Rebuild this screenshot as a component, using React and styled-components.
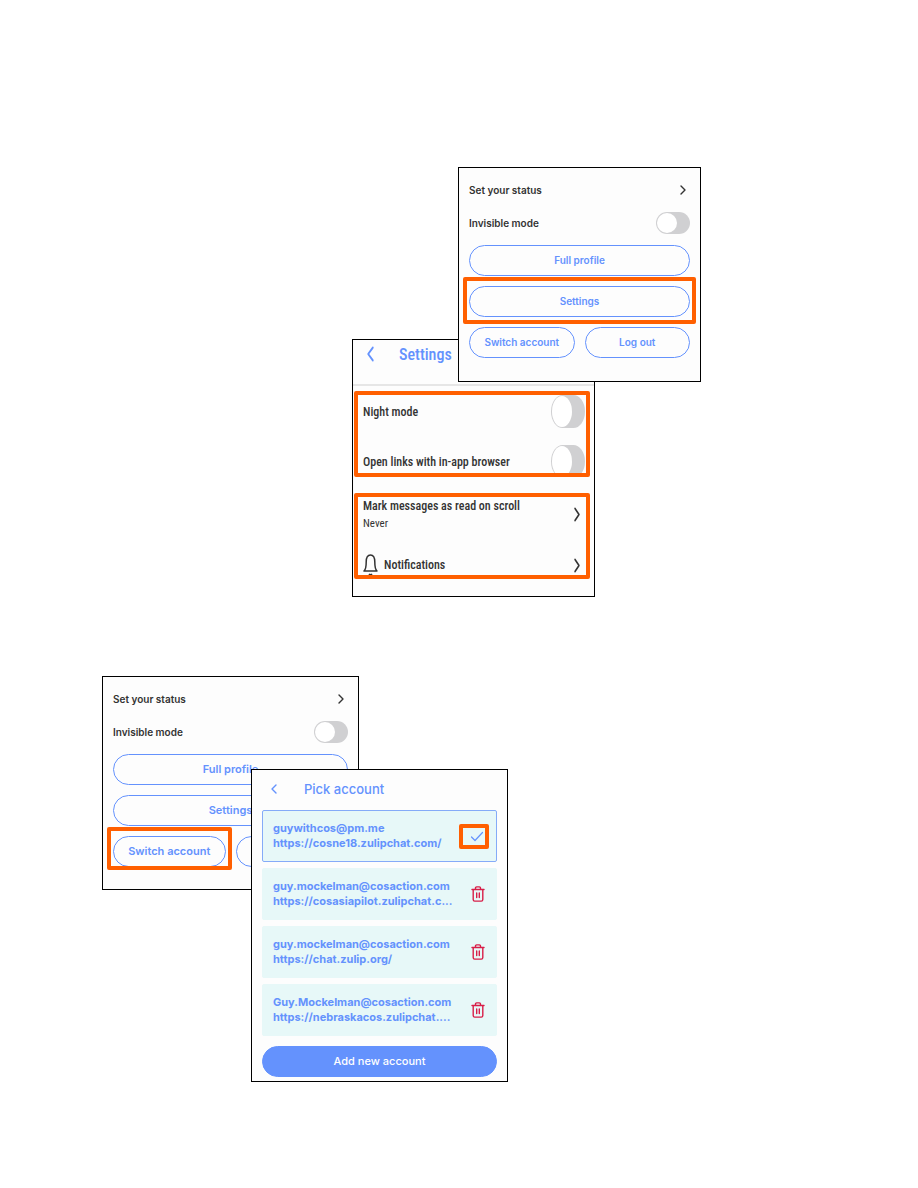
import React, { useState } from "react";
import styled, { createGlobalStyle } from "styled-components";

const GlobalStyle = createGlobalStyle`
  * {
    box-sizing: border-box;
  }
  body {
    margin: 0;
    background: #ffffff;
    color: #333333;
    font-family: Inter, "Liberation Sans", sans-serif;
  }
`;

const Page = styled.main`
  display: flex;
  flex-direction: column;
  gap: 79px;
  padding: 167px 0 106px;
`;

const Figure = styled.section`
  display: grid;
  grid-template-columns: ${(props) => props.$columns};
  grid-template-rows: ${(props) => props.$rows};
`;

const Panel = styled.article`
  grid-area: ${(props) => props.$area};
  z-index: ${(props) => (props.$front ? 1 : 0)};
  min-width: 0;
  border: 1px solid #000000;
  background: #fdfdfd;
`;

const MenuPanel = styled(Panel)`
  padding: 0 10px;
  font-size: ${(props) => (props.$large ? 11 : 10)}px;
`;

const StatusRow = styled.button`
  display: flex;
  align-items: center;
  justify-content: space-between;
  width: 100%;
  height: 44px;
  padding: 0 4px 0 0;
  border: 0;
  background: none;
  color: #333333;
  font: inherit;
  font-size: 10px;
  font-weight: 600;
  cursor: pointer;
`;

const ToggleRow = styled.label`
  display: flex;
  align-items: center;
  justify-content: space-between;
  font-size: 10px;
  font-weight: 600;
`;

const Toggle = styled.input.attrs({ type: "checkbox", role: "switch" })`
  appearance: none;
  flex: none;
  display: flex;
  width: 34px;
  height: ${(props) => (props.$tall ? 33 : 22)}px;
  margin: 0;
  padding: 1px;
  border-radius: ${(props) => (props.$tall ? "12px / 17px" : "11px")};
  background: #d0d0d2;
  cursor: pointer;

  &::before {
    content: "";
    width: 20px;
    height: 100%;
    border-radius: 50%;
    background: #ffffff;
  }

  &:checked {
    justify-content: flex-end;
    background: #6492fd;
  }
`;

const ButtonStack = styled.div`
  display: flex;
  flex-direction: column;
  gap: 10px;
  padding: 11px 0 23px;
`;

const ButtonPair = styled.div`
  display: grid;
  grid-template-columns: 1fr 1fr;
  gap: 10px;
`;

const PillButton = styled.button`
  width: 100%;
  height: 31px;
  padding: 0 0 1px;
  border: 1px solid #6492fd;
  border-radius: 16px;
  background: ${(props) => (props.$filled ? "#6492fd" : "transparent")};
  color: ${(props) => (props.$filled ? "#ffffff" : "#6492fd")};
  font: inherit;
  font-weight: ${(props) => (props.$filled ? 500 : 600)};
  white-space: nowrap;
  cursor: pointer;
`;

const Marked = styled.div`
  position: relative;

  &::after {
    content: "";
    position: absolute;
    inset: ${(props) => props.$inset};
    border: 4px solid #ff5f00;
    border-radius: 2px;
    pointer-events: none;
  }
`;

const BackButton = styled.button`
  display: flex;
  padding: 0;
  border: 0;
  background: none;
  color: #6492fd;
  cursor: pointer;
`;

const SettingsPanel = styled(Panel)`
  padding-bottom: 1px;
  font-family: "Roboto Condensed", "Liberation Sans Narrow", Roboto, sans-serif;
`;

const SettingsHeader = styled.header`
  display: flex;
  align-items: center;
  gap: 25px;
  height: 46px;
  padding: 0 0 16px 14px;
  border-bottom: 2px solid #e6e6e6;
`;

const SettingsTitle = styled.h2`
  margin: 0;
  color: #6492fd;
  font-size: 16px;
  font-weight: 500;
`;

const SettingsGroup = styled.div`
  display: flex;
  flex-direction: column;
  height: 86px;
  margin: 5px 4px 16px 1px;
  padding: 0 1px 0 5px;
  border: 4px solid #ff5f00;
  border-radius: 2px;
  overflow: hidden;
`;

const SettingRow = styled(ToggleRow)`
  flex: none;
  height: 33px;
  margin-bottom: 17px;
  font-size: 12px;
  font-weight: 500;
`;

const LinkRow = styled.button`
  flex: none;
  display: flex;
  align-items: center;
  gap: 6px;
  height: ${(props) => props.$height}px;
  padding: 0 5px 0 0;
  border: 0;
  background: none;
  color: #333333;
  font-family: inherit;
  font-size: 12px;
  font-weight: 500;
  line-height: 17px;
  text-align: left;
  cursor: pointer;
`;

const LinkText = styled.span`
  flex: 1;
`;

const LinkNote = styled.span`
  display: block;
  font-size: 11px;
  font-weight: 400;
`;

const AccountPanel = styled(Panel)`
  padding: 0 10px 4px;
  font-size: 11px;
`;

const AccountHeader = styled.header`
  display: flex;
  align-items: center;
  gap: 27px;
  height: 40px;
  padding: 0 0 2px 9px;
`;

const AccountTitle = styled.h2`
  margin: 0;
  color: #6492fd;
  font-size: 13px;
  font-weight: 500;
`;

const AccountList = styled.ul`
  display: flex;
  flex-direction: column;
  gap: 6px;
  margin: 0 0 10px;
  padding: 0;
  list-style: none;
`;

const AccountItem = styled.li`
  display: flex;
  align-items: center;
  justify-content: space-between;
  height: 52px;
  padding: 0 11px 0 10px;
  border: 1px solid ${(props) => (props.$active ? "#85abf8" : "#e7f8f8")};
  border-radius: 2px;
  background: #e7f8f8;
`;

const AccountText = styled.div`
  min-width: 0;
  color: #6492fd;
  font-weight: 700;
  line-height: 15px;
  white-space: nowrap;
`;

const IconButton = styled.button`
  display: flex;
  padding: 0;
  border: 0;
  background: none;
  color: #d81e48;
  cursor: pointer;
`;

const CurrentMark = styled(Marked)`
  display: flex;
  color: #6492fd;
`;

function Chevron({ back, width = 6, height = 10 }) {
  return (
    <svg width={width} height={height} viewBox="0 0 6 10" preserveAspectRatio="none" fill="none" stroke="currentColor" strokeWidth="1.4" strokeLinecap="round" strokeLinejoin="round">
      <path d={back ? "M5 1L1 5l4 4" : "M1 1l4 4-4 4"} />
    </svg>
  );
}

function BellIcon() {
  return (
    <svg width="15" height="22" viewBox="0 0 15 22" fill="none" stroke="currentColor" strokeWidth="1.5" strokeLinejoin="round">
      <path d="M1 17h13c-1.800-1.500-2.200-3-2.200-9C11.800 3.500 10 1 7.500 1S3.200 3.500 3.200 8c0 6-.4 7.500-2.200 9z" />
      <path d="M6 20c.8 1 2.200 1 3 0" />
    </svg>
  );
}

function TrashIcon() {
  return (
    <svg width="14" height="16" viewBox="0 0 14 16" fill="none" stroke="currentColor" strokeWidth="1.400" strokeLinecap="round" strokeLinejoin="round">
      <path d="M1 3.500h12M2.200 3.500v10c0 1 .6 1.600 1.500 1.600h6.600c.9 0 1.500-.6 1.500-1.600v-10M4.500 3.500V2c0-.7.4-1.100 1.100-1.100h2.800c.7 0 1.100.4 1.100 1.100v1.500M5.700 7v4.500M8.300 7v4.500" />
    </svg>
  );
}

function CheckIcon() {
  return (
    <svg width="16" height="11" viewBox="0 0 16 11" fill="none" stroke="currentColor" strokeWidth="1.200" strokeLinecap="round" strokeLinejoin="round">
      <path d="M2.500 6L6 9.500 13.500 1.500" />
    </svg>
  );
}

const accounts = [
  { email: "guywithcos@pm.me", url: "https://cosne18.zulipchat.com/", active: true },
  { email: "guy.mockelman@cosaction.com", url: "https://cosasiapilot.zulipchat.c..." },
  { email: "guy.mockelman@cosaction.com", url: "https://chat.zulip.org/" },
  { email: "Guy.Mockelman@cosaction.com", url: "https://nebraskacos.zulipchat...." },
];

function ProfileMenu({ area, front, large, marked }) {
  const [invisible, setInvisible] = useState(false);

  const settings = <PillButton>Settings</PillButton>;
  const switchAccount = <PillButton>Switch account</PillButton>;

  return (
    <MenuPanel $area={area} $front={front} $large={large}>
      <StatusRow>
        Set your status
        <Chevron />
      </StatusRow>
      <ToggleRow>
        Invisible mode
        <Toggle checked={invisible} onChange={() => setInvisible(!invisible)} />
      </ToggleRow>
      <ButtonStack>
        <PillButton>Full profile</PillButton>
        {marked === "settings" ? <Marked $inset="-9px -6px -7px">{settings}</Marked> : settings}
        <ButtonPair>
          {marked === "switch" ? <Marked $inset="-9px -6px -3px">{switchAccount}</Marked> : switchAccount}
          <PillButton>Log out</PillButton>
        </ButtonPair>
      </ButtonStack>
    </MenuPanel>
  );
}

function Settings({ area }) {
  const [night, setNight] = useState(false);
  const [inApp, setInApp] = useState(false);

  return (
    <SettingsPanel $area={area}>
      <SettingsHeader>
        <BackButton aria-label="Back">
          <Chevron back width={7} height={16} />
        </BackButton>
        <SettingsTitle>Settings</SettingsTitle>
      </SettingsHeader>
      <SettingsGroup>
        <SettingRow>
          Night mode
          <Toggle $tall checked={night} onChange={() => setNight(!night)} />
        </SettingRow>
        <SettingRow>
          Open links with in-app browser
          <Toggle $tall checked={inApp} onChange={() => setInApp(!inApp)} />
        </SettingRow>
      </SettingsGroup>
      <SettingsGroup>
        <LinkRow $height={35}>
          <LinkText>
            Mark messages as read on scroll
            <LinkNote>Never</LinkNote>
          </LinkText>
          <Chevron height={15} />
        </LinkRow>
        <LinkRow $height={66}>
          <BellIcon />
          <LinkText>Notifications</LinkText>
          <Chevron height={15} />
        </LinkRow>
      </SettingsGroup>
    </SettingsPanel>
  );
}

function PickAccount({ area }) {
  return (
    <AccountPanel $area={area} $front>
      <AccountHeader>
        <BackButton aria-label="Back">
          <Chevron back />
        </BackButton>
        <AccountTitle>Pick account</AccountTitle>
      </AccountHeader>
      <AccountList>
        {accounts.map((account) => (
          <AccountItem key={account.url} $active={account.active}>
            <AccountText>
              <div>{account.email}</div>
              <div>{account.url}</div>
            </AccountText>
            {account.active ? (
              <CurrentMark $inset="-7px -4px -7px -10px">
                <CheckIcon />
              </CurrentMark>
            ) : (
              <IconButton aria-label="Remove account">
                <TrashIcon />
              </IconButton>
            )}
          </AccountItem>
        ))}
      </AccountList>
      <PillButton $filled>Add new account</PillButton>
    </AccountPanel>
  );
}

export default function App() {
  return (
    <React.Fragment>
      <GlobalStyle />
      <Page>
        <Figure $columns="352fr 106fr 137fr 106fr 217fr" $rows="172px 43px auto">
          <ProfileMenu area="1 / 3 / 3 / 5" front marked="settings" />
          <Settings area="2 / 2 / 4 / 4" />
        </Figure>
        <Figure $columns="102fr 149fr 108fr 149fr 410fr" $rows="93px 121px auto">
          <ProfileMenu area="1 / 2 / 3 / 4" large marked="switch" />
          <PickAccount area="2 / 3 / 4 / 5" />
        </Figure>
      </Page>
    </React.Fragment>
  );
}
